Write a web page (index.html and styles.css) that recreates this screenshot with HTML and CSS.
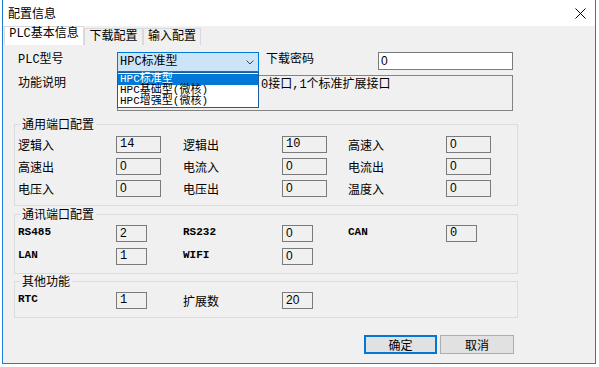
FILE: index.html
```html
<!DOCTYPE html>
<html lang="zh-CN">
<head>
    <meta charset="UTF-8">
    <title>配置信息</title>
    <link rel="stylesheet" href="styles.css">
</head>
<body>
<div class="window">
    <div class="titlebar">
        <span class="title">配置信息</span>
        <svg class="close" width="11" height="11" viewBox="0 0 11 11">
            <path d="M0.5 0.5 L10.5 10.5 M10.5 0.5 L0.5 10.5" stroke="#000" stroke-width="1" fill="none"/>
        </svg>
    </div>

    <div class="client">
        <div class="tabs">
            <div class="tab active ss">PLC基本信息</div>
            <div class="tab ss">下载配置</div>
            <div class="tab ss">输入配置</div>
        </div>

        <div class="panel">
            <div class="basic">
                <span class="label ss">PLC型号</span>
                <div class="combo">
                    <div class="combo-box ss">
                        <span>HPC标准型</span>
                        <svg class="chevron" width="8" height="5" viewBox="0 0 8 5">
                            <polyline points="0.5,0.5 4,4 7.5,0.5" stroke="#444" stroke-width="1" fill="none"/>
                        </svg>
                    </div>
                    <ul class="combo-list ss">
                        <li class="selected">HPC标准型</li>
                        <li>HPC基础型(微核)</li>
                        <li>HPC增强型(微核)</li>
                    </ul>
                </div>
                <span class="label ss pw-label">下载密码</span>
                <div class="input">0</div>

                <span class="label ss desc-label">功能说明</span>
                <div class="desc ss">0接口,1个标准扩展接口</div>
            </div>

            <fieldset class="group">
                <legend>通用端口配置</legend>
                <div class="grid">
                    <span class="name">逻辑入</span><div class="field w45 ss">14</div>
                    <span class="name">逻辑出</span><div class="field w45 ss">10</div>
                    <span class="name">高速入</span><div class="field w45">0</div>

                    <span class="name">高速出</span><div class="field w45">0</div>
                    <span class="name">电流入</span><div class="field w45">0</div>
                    <span class="name">电流出</span><div class="field w45">0</div>

                    <span class="name">电压入</span><div class="field w45">0</div>
                    <span class="name">电压出</span><div class="field w45">0</div>
                    <span class="name">温度入</span><div class="field w45">0</div>
                </div>
            </fieldset>

            <fieldset class="group comm">
                <legend>通讯端口配置</legend>
                <div class="grid">
                    <span class="name en">RS485</span><div class="field w30">2</div>
                    <span class="name en">RS232</span><div class="field w30">0</div>
                    <span class="name en">CAN</span><div class="field w30 ss">0</div>

                    <span class="name en">LAN</span><div class="field w30 ss">1</div>
                    <span class="name en">WIFI</span><div class="field w30">0</div>
                </div>
            </fieldset>

            <fieldset class="group other">
                <legend>其他功能</legend>
                <div class="grid">
                    <span class="name en">RTC</span><div class="field w30 ss">1</div>
                    <span class="name">扩展数</span><div class="field w30">20</div>
                </div>
            </fieldset>

            <div class="buttons">
                <button class="btn default">确定</button>
                <button class="btn">取消</button>
            </div>
        </div>
    </div>
</div>
</body>
</html>
```

FILE: styles.css
```css
:root {
    --accent: #0078d7;
    --face: #f0f0f0;
    --tab-border: #d9d9d9;
    --group-border: #dcdcdc;
    --field-border: #7a7a7a;
    --button-face: #e1e1e1;
    --font-ui: "Noto Sans CJK SC", sans-serif;
    --font-song: "Liberation Mono", "Noto Sans CJK SC", monospace;
}

* {
    box-sizing: border-box;
    margin: 0;
    padding: 0;
}

body {
    background: #ffffff;
    font-family: var(--font-ui);
    font-size: 12px;
    line-height: 14px;
    color: #000000;
}

.ss {
    font-family: var(--font-song);
}

.window {
    width: 594px;
    height: 364px;
    margin-left: 2px;
    border: 1px solid #1a7fd4;
    border-top: 0;
    display: flex;
    flex-direction: column;
}

.titlebar {
    height: 26px;
    background: #ffffff;
    display: flex;
    align-items: center;
    justify-content: space-between;
    padding: 0 9px 0 5px;
}

.close {
    display: block;
}

.client {
    flex: 1;
    background: var(--face);
}

/* 选项卡 */
.tabs {
    display: flex;
    align-items: flex-end;
    height: 19px;
    padding-left: 1px;
}

.tab {
    height: 17px;
    width: 59px;
    border: 1px solid var(--tab-border);
    border-bottom: 0;
    text-align: center;
    line-height: 16px;
}

.tab + .tab + .tab {
    width: 58px;
}

.tab.active {
    width: 80px;
    height: 19px;
    background: #ffffff;
    line-height: 15px;
}

.panel {
    padding: 7px 0 0 11px;
}

/* 基本信息 */
.basic {
    display: grid;
    grid-template-columns: 99px 142px 119px 135px;
    grid-template-rows: 20px 36px;
    row-gap: 3px;
    padding-left: 4px;
}

.label {
    line-height: 16px;
}

.pw-label {
    padding-left: 7px;
}

.desc-label {
    padding-top: 1px;
}

.combo {
    position: relative;
}

.combo-box {
    height: 20px;
    border: 1px solid var(--accent);
    background: #cce4f7;
    display: flex;
    align-items: center;
    justify-content: space-between;
    padding: 0 4px 0 2px;
}

.chevron {
    display: block;
    margin-top: 1px;
}

.combo-list {
    position: absolute;
    top: 20px;
    left: 0;
    width: 142px;
    list-style: none;
    background: #ffffff;
    border: 1px solid #1c5c9e;
    padding-top: 1px;
    z-index: 2;
}

.combo-list li {
    height: 11px;
    font-size: 11px;
    line-height: 11px;
    padding-left: 2px;
    white-space: nowrap;
}

.combo-list li.selected {
    background: var(--accent);
    color: #ffffff;
}

.input {
    height: 18px;
    border: 1px solid var(--field-border);
    background: #ffffff;
    padding-left: 2px;
    line-height: 16px;
    font-family: "Liberation Sans", sans-serif;
}

.desc {
    grid-column: 2 / 5;
    height: 36px;
    border: 1px solid #838383;
    padding: 2px 0 0 143px;
    white-space: nowrap;
    overflow: hidden;
}

/* 分组框 */
.group {
    width: 504px;
    margin-top: 6px;
    border: 1px solid var(--group-border);
    padding: 5px 0 8px 3px;
    min-width: 0;
}

.group legend {
    margin-left: 2px;
    padding: 0 2px;
    line-height: 14px;
}

.group.comm {
    margin-top: 1px;
    padding-top: 4px;
}

.group.other {
    margin-top: 0;
    padding-top: 4px;
}

.grid {
    display: grid;
    grid-template-columns: 98px 67px 99px 66px 98px 1fr;
    grid-auto-rows: 17px;
    row-gap: 5px;
    align-items: center;
}

.group.comm .grid {
    row-gap: 6px;
}

.name {
    line-height: 14px;
}

.name.en {
    font-family: "Liberation Mono", monospace;
    font-weight: bold;
    font-size: 11px;
    margin-top: -3px;
}

.field {
    height: 17px;
    border: 1px solid var(--field-border);
    padding-left: 3px;
    line-height: 15px;
    font-family: "Liberation Sans", sans-serif;
}

.field.ss {
    font-family: var(--font-song);
}

.w45 {
    width: 45px;
}

.w30 {
    width: 31px;
}

/* 按钮 */
.buttons {
    width: 504px;
    display: flex;
    justify-content: flex-end;
    gap: 3px;
    padding-right: 4px;
    margin-top: 17px;
}

.btn {
    width: 74px;
    height: 19px;
    background: var(--button-face);
    border: 1px solid #adadad;
    font-family: var(--font-ui);
    font-size: 12px;
    line-height: 15px;
    color: #000000;
}

.btn.default {
    width: 73px;
    border: 2px solid var(--accent);
}
```
